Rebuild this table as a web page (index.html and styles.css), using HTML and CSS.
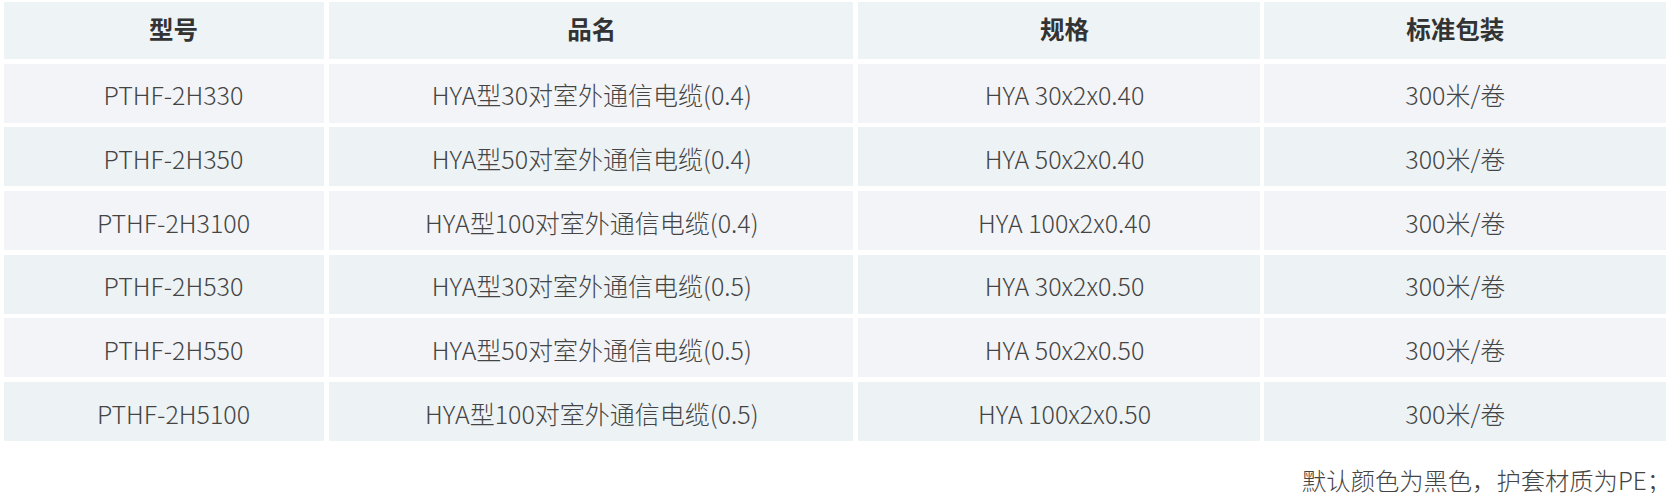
FILE: index.html
```html
<!DOCTYPE html>
<html lang="zh-CN">
<head>
<meta charset="utf-8">
<title>HYA 通信电缆</title>
<link rel="stylesheet" href="styles.css">
</head>
<body>
<div class="page">
  <div class="spec-table">
    <div class="cell head c1">型号</div>
    <div class="cell head c2">品名</div>
    <div class="cell head c3">规格</div>
    <div class="cell head c4">标准包装</div>

    <div class="cell odd c1">PTHF-2H330</div>
    <div class="cell odd c2">HYA型30对室外通信电缆(0.4)</div>
    <div class="cell odd c3">HYA 30x2x0.40</div>
    <div class="cell odd c4">300米/卷</div>

    <div class="cell even c1">PTHF-2H350</div>
    <div class="cell even c2">HYA型50对室外通信电缆(0.4)</div>
    <div class="cell even c3">HYA 50x2x0.40</div>
    <div class="cell even c4">300米/卷</div>

    <div class="cell odd c1">PTHF-2H3100</div>
    <div class="cell odd c2">HYA型100对室外通信电缆(0.4)</div>
    <div class="cell odd c3">HYA 100x2x0.40</div>
    <div class="cell odd c4">300米/卷</div>

    <div class="cell even c1">PTHF-2H530</div>
    <div class="cell even c2">HYA型30对室外通信电缆(0.5)</div>
    <div class="cell even c3">HYA 30x2x0.50</div>
    <div class="cell even c4">300米/卷</div>

    <div class="cell odd c1">PTHF-2H550</div>
    <div class="cell odd c2">HYA型50对室外通信电缆(0.5)</div>
    <div class="cell odd c3">HYA 50x2x0.50</div>
    <div class="cell odd c4">300米/卷</div>

    <div class="cell even c1">PTHF-2H5100</div>
    <div class="cell even c2">HYA型100对室外通信电缆(0.5)</div>
    <div class="cell even c3">HYA 100x2x0.50</div>
    <div class="cell even c4">300米/卷</div>
  </div>
  <p class="note">默认颜色为黑色，护套材质为PE<span class="semi">；</span></p>
</div>
</body>
</html>
```
FILE: styles.css
```css
html, body {
  margin: 0;
  padding: 0;
  background: #ffffff;
}

body {
  font-family: "Noto Sans CJK SC", "Noto Sans", sans-serif;
  color: #444444;
}

.page {
  padding: 2px 6px 0 4px;
}

.spec-table {
  display: grid;
  grid-template-columns: 320px 524.5px 402px 401.5px;
  grid-template-rows: 57px;
  grid-auto-rows: 59px;
  column-gap: 4.5px;
  row-gap: 4.7px;
}

.cell {
  display: flex;
  align-items: center;
  justify-content: center;
  box-sizing: border-box;
  padding-top: 2px;
  font-size: 25px;
  font-weight: 300;
  white-space: nowrap;
}

.c1 { padding-left: 19px; }
.c2 { padding-left: 2px; }
.c3 { padding-left: 12px; }
.c4 { padding-right: 19px; }

.head {
  background: #eef3f5;
  font-weight: 700;
  font-size: 24.5px;
  color: #333333;
  padding-top: 0;
  padding-bottom: 5px;
}

.odd {
  background: #f3f4f7;
}

.even {
  background: #edf2f5;
}

.note {
  margin: 22px -6px 0 0;
  text-align: right;
  font-size: 24.3px;
  font-weight: 300;
  line-height: 34px;
  color: #444444;
  white-space: nowrap;
}

.semi {
  font-family: "Noto Sans CJK TC", "Noto Sans CJK SC", sans-serif;
}
```
